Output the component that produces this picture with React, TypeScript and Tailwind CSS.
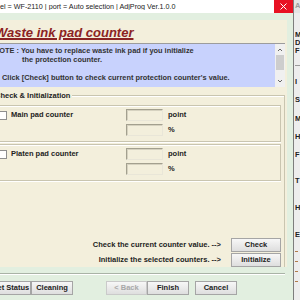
import React from "react";

const btn =
  "h-[14px] shrink-0 border border-[#a5a5a5] bg-gradient-to-b from-[#f7f7f7] to-[#dedede] text-[7.5px] font-bold leading-none text-[#222] flex items-center justify-center whitespace-nowrap";

function Field() {
  return (
    <div className="w-[37px] h-[12px] border border-t-[#a3a08f] border-l-[#a3a08f] border-r-[#e9e6d8] border-b-[#e9e6d8] shadow-[inset_1px_1px_0_#d6d2c0] bg-[#f3efdc]"></div>
  );
}

function PadBox({ label, className }: { label: string; className: string }) {
  return (
    <div
      className={
        "mr-[3px] h-[37px] border border-l-0 border-[#c9c5b0] shadow-[inset_0_1px_0_#ffffff,0_1px_0_#ffffff] flex pt-[3px] " +
        className
      }
    >
      <div className="w-[126px] h-[12px] flex items-center">
        <div className="w-[9px] h-[9px] -ml-[2px] bg-white border border-[#8e8e8e]"></div>
        <span className="ml-[4px] text-[7.5px] font-bold text-[#222] leading-none">{label}</span>
      </div>
      <div className="flex flex-col gap-[3px]">
        <div className="flex items-center gap-[5px]">
          <Field />
          <span className="text-[7.5px] font-bold text-[#222] leading-none">point</span>
        </div>
        <div className="flex items-center gap-[5px]">
          <Field />
          <span className="text-[7.5px] font-bold text-[#222] leading-none">%</span>
        </div>
      </div>
    </div>
  );
}

export default function App() {
  return (
    <div className="w-[300px] h-[300px] overflow-hidden flex bg-[#e2efe0] font-['Liberation_Sans',Arial,sans-serif]">
      <div className="w-[293px] shrink-0 flex flex-col">
        {/* title bar */}
        <div className="h-[13px] bg-white flex items-center">
          <div className="flex-1 overflow-hidden whitespace-nowrap text-[7.2px] text-[#222] leading-none">
            el = WF-2110 | port = Auto selection | AdjProg Ver.1.0.0
          </div>
          <div className="w-[19px] h-full bg-[#e81123] flex items-center justify-center">
            <svg width="7" height="7" viewBox="0 0 7 7">
              <path d="M0.5 0.5L6.5 6.5M6.5 0.5L0.5 6.5" stroke="#fff" strokeWidth="1" />
            </svg>
          </div>
        </div>

        <div className="flex-1 flex flex-col pt-[7px]">
          <div className="w-[287px] h-[247px] bg-[#f3efdc] flex flex-col">
            <div className="h-[23px] -ml-[5px] whitespace-nowrap">
              <span className="text-[13px] leading-[15px] font-bold italic text-[#8b2323] underline decoration-[1.5px] underline-offset-[1px]">
                Waste ink pad counter
              </span>
            </div>

            {/* note */}
            <div className="w-[285px] h-[44px] bg-[#c8d2fd] border-t border-[#9c9c9c] flex">
              <div className="flex-1 pt-[2px] text-[7.4px] font-bold leading-[9px] text-[#333] whitespace-nowrap overflow-hidden">
                <div className="-ml-[6px]">NOTE : You have to replace waste ink pad if you initialize</div>
                <div className="ml-[22px]">the protection counter.</div>
                <div className="h-[9px]"></div>
                <div className="ml-[2px]">Click [Check] button to check current protection counter's value.</div>
              </div>
              <div className="w-[10px] bg-[#f0f0f0] flex flex-col items-center">
                <svg width="6" height="8" viewBox="0 0 6 8" className="mt-[2px]">
                  <path d="M1 5L3 3L5 5" stroke="#666" fill="none" />
                </svg>
                <div className="w-[8px] h-[15px] bg-[#cdcdcd] mt-[1px]"></div>
                <div className="flex-1"></div>
                <svg width="6" height="8" viewBox="0 0 6 8" className="mb-[2px]">
                  <path d="M1 3L3 5L5 3" stroke="#666" fill="none" />
                </svg>
              </div>
            </div>

            {/* group */}
            <div className="mt-[8px] w-[285px] flex-1 border-t border-r border-[#c9c5b0] shadow-[inset_0_1px_0_#ffffff] flex flex-col">
              <div className="-mt-[5px] -ml-[5px] self-start bg-[#f3efdc] pr-[2px] text-[7.5px] font-bold leading-[9px] text-[#222]">
                Check &amp; Initialization
              </div>
              <PadBox label="Main pad counter" className="mt-[5px]" />
              <PadBox label="Platen pad counter" className="mt-[2px]" />

              <div className="mt-[58px] mr-[3px] h-[12px] flex items-center justify-end">
                <span className="text-[7.5px] font-bold text-[#222] leading-none">
                  Check the current counter value. --&gt;
                </span>
                <div className={btn + " w-[50px] ml-[10px] h-[12px]"}>Check</div>
              </div>
              <div className="mt-[3px] mr-[3px] h-[12px] flex items-center justify-end">
                <span className="text-[7.5px] font-bold text-[#222] leading-none">
                  Initialize the selected counters. --&gt;
                </span>
                <div className={btn + " w-[50px] ml-[10px] h-[12px]"}>Initialize</div>
              </div>
            </div>
          </div>

          <div className="mt-[6px] w-[285px] h-px bg-[#a9b3a6] shadow-[0_1px_0_#ffffff]"></div>

          <div className="mt-[7px] flex">
            <div className={btn + " w-[41px] -ml-[10px]"}>Get Status</div>
            <div className={btn + " w-[42px]"}>Cleaning</div>
            <div className={btn + " w-[41px] ml-[33px] text-[#a8a8a8] border-[#cacaca]"}>&lt; Back</div>
            <div className={btn + " w-[42px] border-[#3c3c3c]"}>Finish</div>
            <div className={btn + " w-[42px] ml-[6px]"}>Cancel</div>
          </div>
        </div>
      </div>

      {/* window behind */}
      <div className="w-[7px] shrink-0 border-l border-[#7d7d7d] bg-[#ededed] flex flex-col text-[7.5px] font-bold leading-[8px] text-[#222] pl-[1px] overflow-hidden">
        <div className="h-[13px] -mx-[1px] pl-[1px] bg-[#e4e4e4] text-[#9a9a9a] pt-[2px]">A</div>
        <div className="mt-[18px]">M</div>
        <div>D</div>
        <div>F</div>
        <div className="mt-[10px] h-px bg-[#9a9a9a]"></div>
        <div className="mt-[12px]">I</div>
        <div className="mt-[10px]">S</div>
        <div className="mt-[11px]">M</div>
        <div className="mt-[10px]">H</div>
        <div className="mt-[10px]">F</div>
        <div className="mt-[18px]">T</div>
        <div className="mt-[19px]">H</div>
        <div className="mt-[19px]">E</div>
        <div className="mt-[12px] w-[3px] h-px bg-[#b07a4a]"></div>
        <div className="mt-[9px] w-[3px] h-px bg-[#b07a4a]"></div>
        <div className="mt-[9px] w-[3px] h-px bg-[#b07a4a]"></div>
        <div className="mt-[9px] w-[3px] h-px bg-[#b07a4a]"></div>
      </div>
    </div>
  );
}
